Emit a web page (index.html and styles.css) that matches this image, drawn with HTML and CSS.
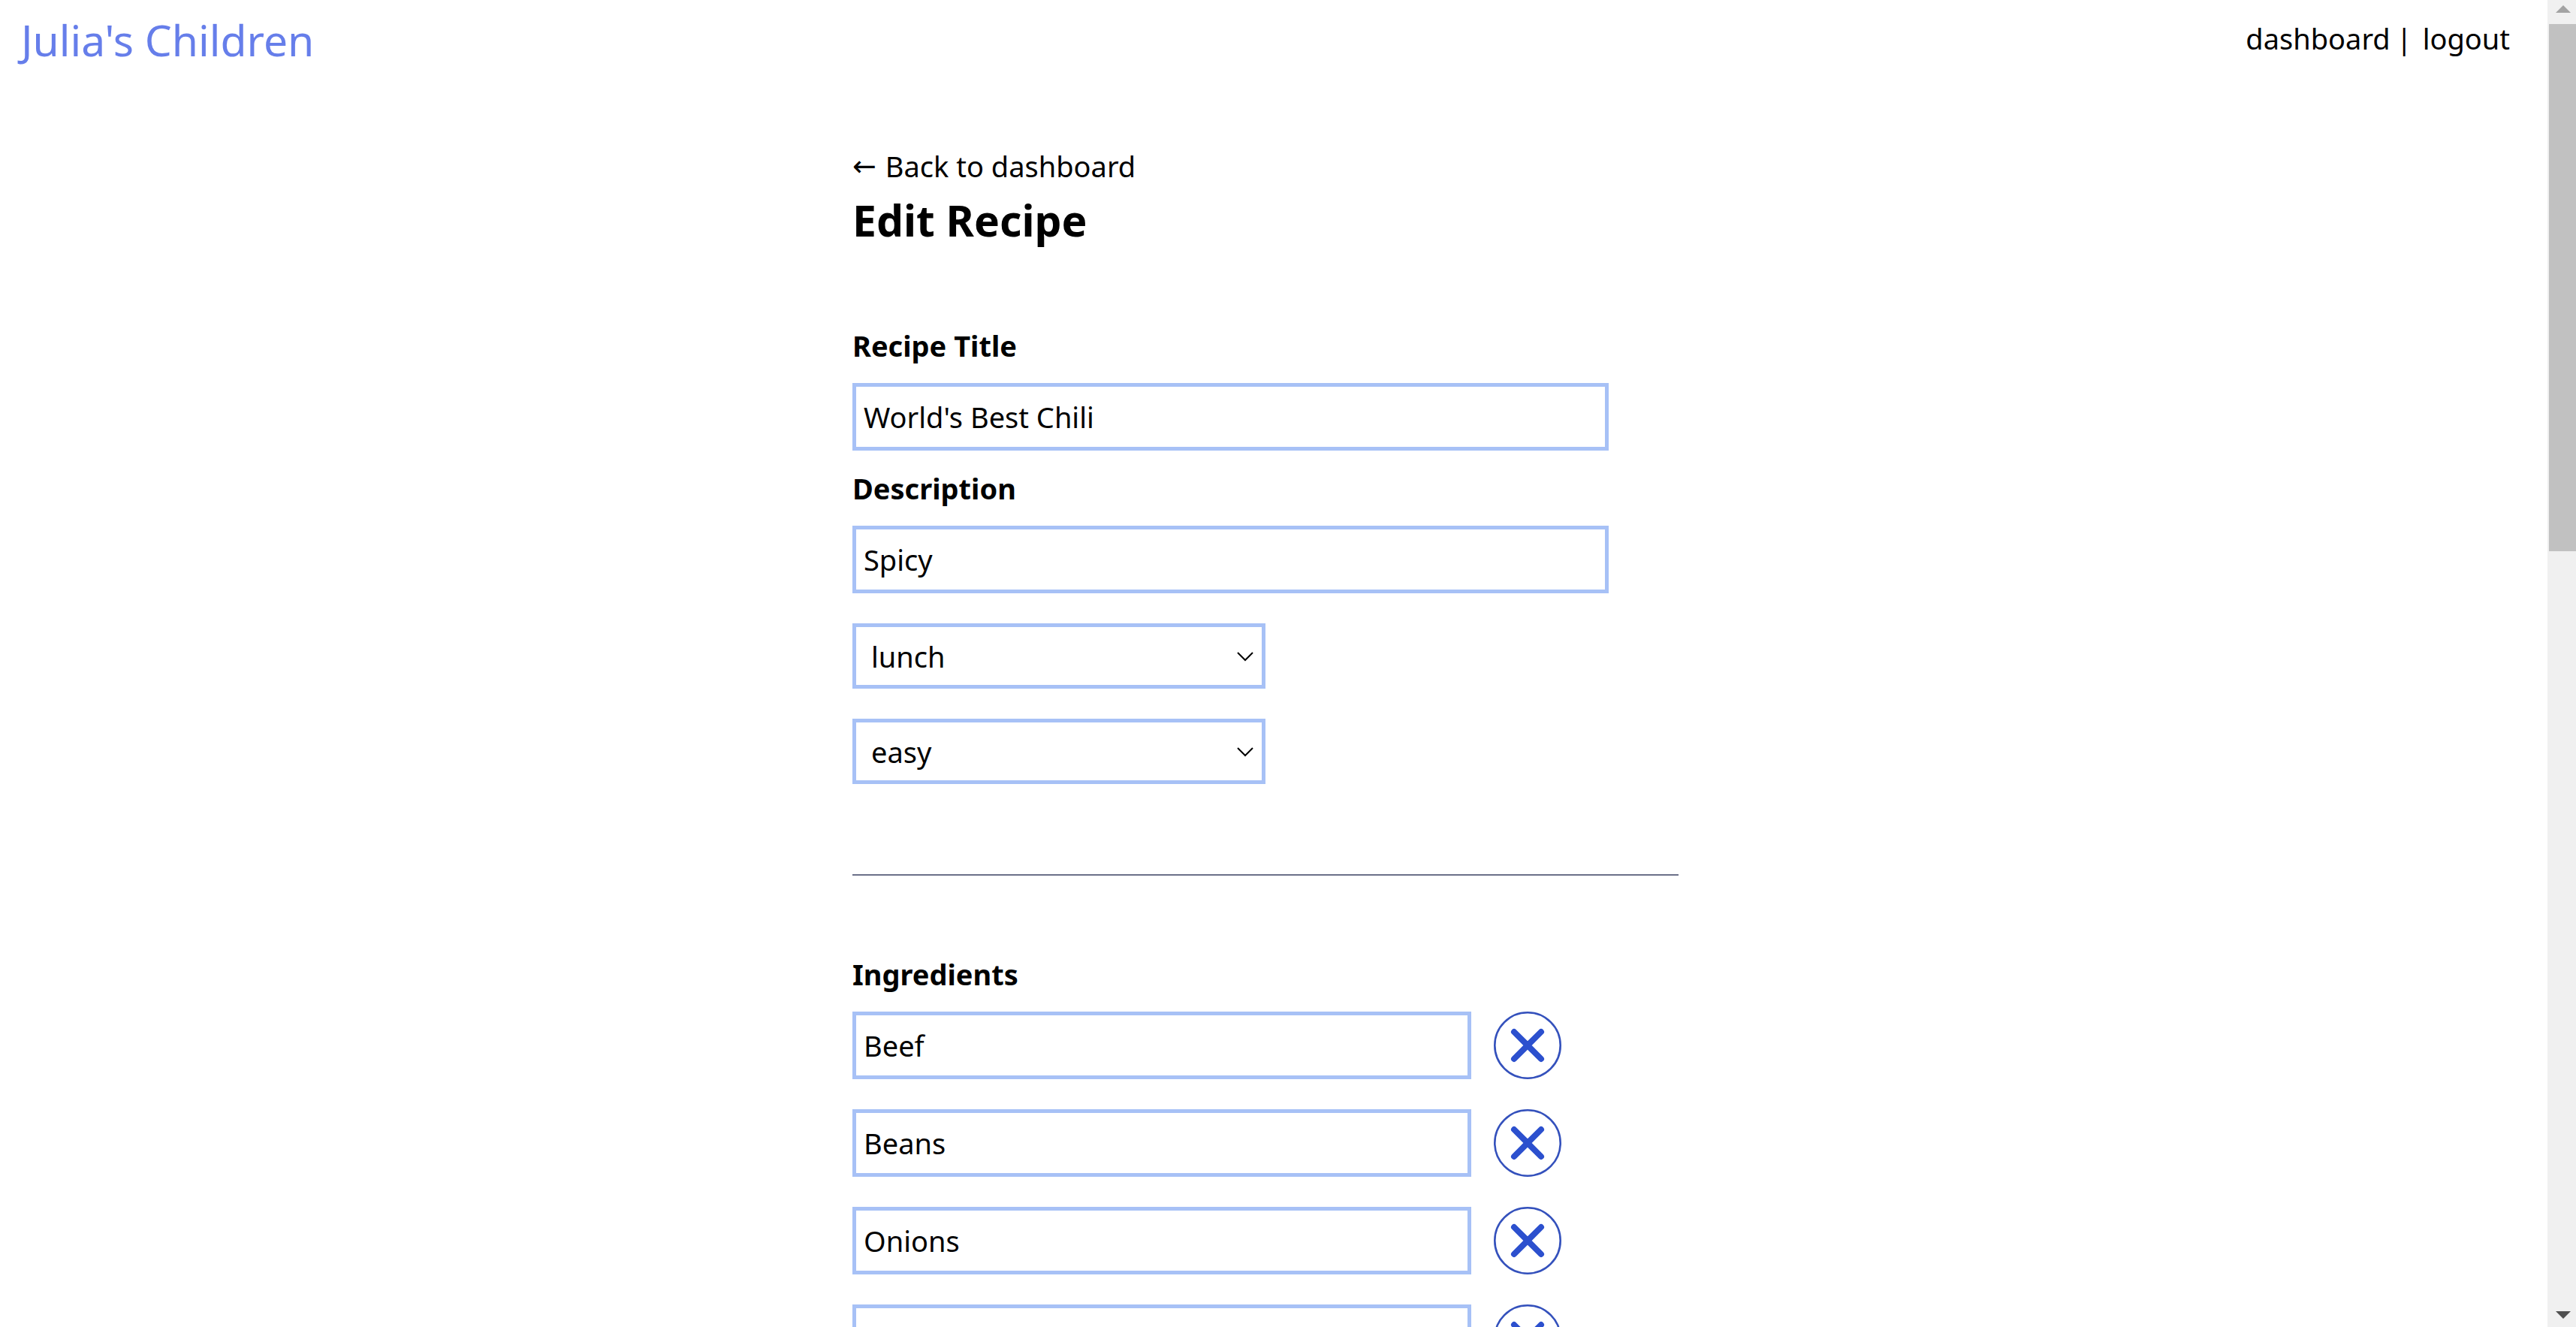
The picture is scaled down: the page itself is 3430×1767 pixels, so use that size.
FILE: index.html
```html
<!DOCTYPE html>
<html lang="en">
<head>
<meta charset="utf-8">
<meta name="viewport" content="width=device-width, initial-scale=1">
<title>Edit Recipe - Julia's Children</title>
<link rel="stylesheet" href="styles.css">
</head>
<body>
<header class="site-header">
  <a class="brand" href="#">Julia's Children</a>
  <nav class="site-nav">
    <a href="#">dashboard</a>
    <span class="divider">|</span>
    <a href="#">logout</a>
  </nav>
</header>

<main class="page">
  <a class="back" href="#"><span class="back-arrow">←</span><span>Back to dashboard</span></a>
  <h1 class="page-title">Edit Recipe</h1>

  <form class="recipe-form">
    <section class="details">
      <div class="field">
        <label for="title">Recipe Title</label>
        <input class="box box-wide" id="title" type="text" value="World's Best Chili">
      </div>
      <div class="field">
        <label for="description">Description</label>
        <input class="box box-wide" id="description" type="text" value="Spicy">
      </div>
      <div class="picker">
        <select id="meal" aria-label="Meal">
          <option>breakfast</option>
          <option selected>lunch</option>
          <option>dinner</option>
        </select>
        <svg class="chevron" viewBox="0 0 24 14" aria-hidden="true"><path d="M2 2l10 10L22 2"/></svg>
      </div>
      <div class="picker">
        <select id="difficulty" aria-label="Difficulty">
          <option selected>easy</option>
          <option>medium</option>
          <option>hard</option>
        </select>
        <svg class="chevron" viewBox="0 0 24 14" aria-hidden="true"><path d="M2 2l10 10L22 2"/></svg>
      </div>
    </section>

    <hr class="rule">

    <section class="ingredients">
      <h2 class="section-title">Ingredients</h2>
      <ul class="ingredient-list">
        <li class="ingredient">
          <input class="box" type="text" value="Beef" aria-label="Ingredient 1">
          <button class="remove" type="button" aria-label="Remove ingredient 1"><svg viewBox="0 0 90 90"><circle cx="45" cy="45" r="43.7"/><path d="M27 27l36 36M63 27L27 63"/></svg></button>
        </li>
        <li class="ingredient">
          <input class="box" type="text" value="Beans" aria-label="Ingredient 2">
          <button class="remove" type="button" aria-label="Remove ingredient 2"><svg viewBox="0 0 90 90"><circle cx="45" cy="45" r="43.7"/><path d="M27 27l36 36M63 27L27 63"/></svg></button>
        </li>
        <li class="ingredient">
          <input class="box" type="text" value="Onions" aria-label="Ingredient 3">
          <button class="remove" type="button" aria-label="Remove ingredient 3"><svg viewBox="0 0 90 90"><circle cx="45" cy="45" r="43.7"/><path d="M27 27l36 36M63 27L27 63"/></svg></button>
        </li>
        <li class="ingredient">
          <input class="box" type="text" value="" aria-label="Ingredient 4">
          <button class="remove" type="button" aria-label="Remove ingredient 4"><svg viewBox="0 0 90 90"><circle cx="45" cy="45" r="43.7"/><path d="M27 27l36 36M63 27L27 63"/></svg></button>
        </li>
      </ul>
    </section>
  </form>
</main>

<div class="scrollbar" aria-hidden="true">
  <svg class="arrow arrow-up" viewBox="0 0 20 10"><path d="M0 10L10 0l10 10z"/></svg>
  <div class="thumb"></div>
  <svg class="arrow arrow-down" viewBox="0 0 20 10"><path d="M0 0h20L10 10z"/></svg>
</div>
</body>
</html>
```
FILE: styles.css
```css
* {
  box-sizing: border-box;
}

html {
  scrollbar-width: none;
}

body {
  margin: 0;
  padding-right: 38px;
  background: #fff;
  color: #000;
  font-family: "Segoe UI", "Noto Sans", sans-serif;
  font-size: 38px;
  line-height: 60px;
}

a {
  color: inherit;
  text-decoration: none;
}

/* Header */
.site-header {
  display: flex;
  justify-content: space-between;
  align-items: flex-start;
  padding: 10px 50px 0 28px;
}

.brand {
  color: #667eea;
  font-size: 57px;
  line-height: 86px;
}

.site-nav {
  display: flex;
  gap: 8px;
  padding-top: 11px;
}

.divider {
  padding-right: 6px;
}

/* Page column */
.page {
  max-width: 1122px;
  margin: 0 auto;
  padding: 95px 22px 60px 0;
}

.back {
  display: flex;
  gap: 12px;
}

.back-arrow {
  font-family: "DejaVu Sans", sans-serif;
}

.page-title {
  margin: 5px 0 99px;
  font-size: 57px;
  line-height: 75px;
}

.details {
  display: flex;
  flex-direction: column;
  gap: 40px;
}

.field {
  display: flex;
  flex-direction: column;
  gap: 20px;
}

.field + .field {
  margin-top: -20px;
}

.field label,
.section-title {
  font-size: 38px;
  font-weight: 700;
}

.box,
.picker select {
  border: 5px solid #a7c1f6;
  border-radius: 0;
  background: #fff;
  color: inherit;
  font: inherit;
}

.box {
  flex: 1;
  min-width: 0;
  padding: 10px;
}

.box-wide {
  width: 1007px;
  max-width: 100%;
}

.picker {
  display: grid;
  width: 50%;
  align-items: center;
}

.picker select {
  grid-area: 1 / 1;
  height: 87px;
  padding: 0 20px;
  appearance: none;
}

.chevron {
  grid-area: 1 / 1;
  justify-self: end;
  width: 24px;
  height: 14px;
  margin-right: 15px;
  fill: none;
  stroke: #000;
  stroke-width: 2;
  pointer-events: none;
}

.rule {
  height: 2px;
  margin: 120px 0 101px;
  border: 0;
  background: #6b7089;
}

/* Ingredients */
.section-title {
  margin: 0 0 20px;
}

.ingredient-list {
  display: flex;
  flex-direction: column;
  gap: 40px;
  margin: 0;
  padding: 0;
  list-style: none;
}

.ingredient {
  display: flex;
  gap: 30px;
  padding-right: 156px;
}

.remove {
  width: 90px;
  height: 90px;
  padding: 0;
  border: 0;
  background: none;
}

.remove svg {
  display: block;
  fill: none;
  stroke: #2c50ce;
}

.remove circle {
  stroke: #3451bc;
  stroke-width: 2.6;
}

.remove path {
  stroke-width: 8;
  stroke-linecap: round;
}

/* Scrollbar */
.scrollbar {
  position: fixed;
  top: 0;
  right: 0;
  bottom: 0;
  display: flex;
  flex-direction: column;
  width: 38px;
  padding: 7px 0 11px 2px;
  background: #f0f0f0;
}

.thumb {
  height: 702px;
  margin: 15px 0 auto;
  background: #c1c1c1;
}

.arrow {
  width: 20px;
  height: 10px;
  margin-left: 9px;
}

.arrow-up {
  fill: #a3a3a3;
}

.arrow-down {
  fill: #505050;
}
```
